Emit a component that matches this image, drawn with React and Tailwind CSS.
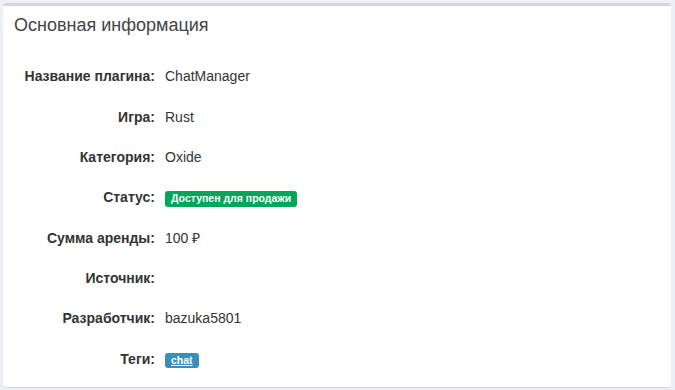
const rows = [
  { label: 'Название плагина:', value: 'ChatManager' },
  { label: 'Игра:', value: 'Rust' },
  { label: 'Категория:', value: 'Oxide' },
  {
    label: 'Статус:',
    value: (
      <span className="inline-block rounded-[3px] bg-[#00a65a] px-[6px] pt-[2px] pb-[3px] text-[10.5px] font-bold leading-none text-white">
        Доступен для продажи
      </span>
    ),
  },
  { label: 'Сумма аренды:', value: '100 ₽' },
  { label: 'Источник:', value: '' },
  { label: 'Разработчик:', value: 'bazuka5801' },
  {
    label: 'Теги:',
    value: (
      <a
        href="#"
        className="inline-block rounded-[3px] bg-[#3c8dbc] px-[6px] pt-[2px] pb-[3px] text-[10.5px] font-bold leading-none text-white underline"
      >
        chat
      </a>
    ),
  },
];

export default function App() {
  return (
    <div className="min-h-screen bg-[#ecf0f5] pt-[3px] pl-[3px] pr-[4px] pb-[2px] font-['Liberation_Sans',Arial,sans-serif]">
      <div className="rounded-[3px] border-t-[3px] border-[#d2d6de] bg-white shadow-[0_1px_1px_rgba(0,0,0,0.1)]">
        <div className="pl-[11px] pr-[10px] pt-[10px] pb-[10px]">
          <h3 className="text-[18px] leading-[1.1] text-[#444]">Основная информация</h3>
        </div>
        <div className="px-[10px] pt-[11px] pb-[8px] text-[14px] text-[#333]">
          {rows.map((row) => (
            <div key={row.label} className="flex h-[40.3px] items-center gap-[10px]">
              <div className="w-[142px] shrink-0 text-right font-bold">{row.label}</div>
              <div>{row.value}</div>
            </div>
          ))}
        </div>
      </div>
    </div>
  );
}
